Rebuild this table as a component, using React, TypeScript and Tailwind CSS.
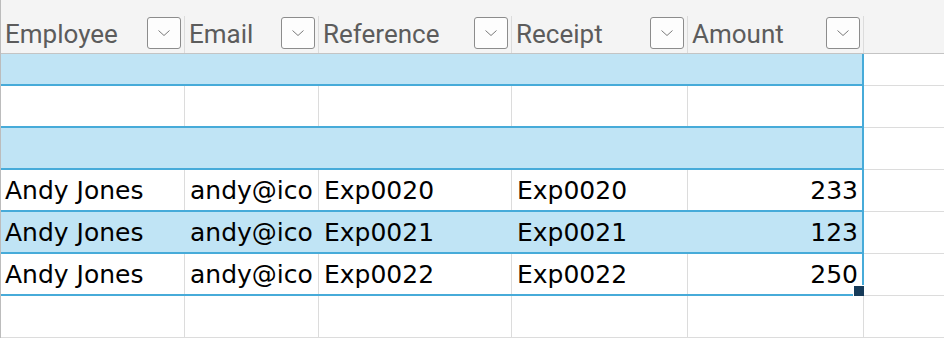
import React from "react";

const cols = [
  { key: "Employee", w: "w-[184px]" },
  { key: "Email", w: "w-[134px]" },
  { key: "Reference", w: "w-[193px]" },
  { key: "Receipt", w: "w-[176px]" },
  { key: "Amount", w: "w-[174px]" },
];

const rows: { blue: boolean; h: string; data?: string[] }[] = [
  { blue: true, h: "h-[30px]" },
  { blue: false, h: "h-[40px]" },
  { blue: true, h: "h-[40px]" },
  { blue: false, h: "h-[40px]", data: ["Andy Jones", "andy@ico", "Exp0020", "Exp0020", "233"] },
  { blue: true, h: "h-[40px]", data: ["Andy Jones", "andy@ico", "Exp0021", "Exp0021", "123"] },
  { blue: false, h: "h-[40px]", data: ["Andy Jones", "andy@ico", "Exp0022", "Exp0022", "250"] },
];

function Chevron() {
  return (
    <svg width="14" height="8" viewBox="0 0 14 8" fill="none">
      <path d="M1.5 1.5 L7 6.5 L12.5 1.5" stroke="#7a7a7a" strokeWidth="1" />
    </svg>
  );
}

export default function App() {
  return (
    <div className="w-[944px] h-[338px] overflow-hidden bg-white border-l border-[#bcbcbc] relative">
      {/* top band */}
      <div className="h-[16px] bg-[#f4f4f4]" />
      {/* header */}
      <div className="flex h-[38px] bg-[#f4f4f4] border-b border-[#c4c4c4]">
        {cols.map((c, i) => (
          <div
            key={c.key}
            className={`${i === 4 ? "w-[176px]" : c.w} flex items-start justify-between border-r border-[#dcdcdc] pl-[4px] pr-[3px]`}
          >
            <span
              className="text-[26px] leading-[37px] text-[#5c5c5c]"
              style={{ fontFamily: "Roboto, 'Noto Sans', sans-serif" }}
            >
              {c.key}
            </span>
            <div className="mt-[1px] w-[34px] h-[32px] shrink-0 rounded-[3px] border border-[#8c8c8c] bg-[#fdfdfd] flex items-center justify-center">
              <Chevron />
            </div>
          </div>
        ))}
        <div className="flex-1" />
      </div>
      {/* body rows */}
      {rows.map((r, ri) => (
        <div key={ri} className="flex">
          <div
            className={`flex ${r.h} box-content border-b-2 border-r-2 border-[#47abd9] ${r.blue ? "bg-[#c0e4f5]" : "bg-white"}`}
          >
            {cols.map((c, i) => (
              <div
                key={c.key}
                className={`${c.w} h-full flex items-center overflow-hidden whitespace-nowrap ${i < 4 ? "border-r" : ""} ${r.blue ? "border-transparent" : "border-[#dcdcdc]"} ${i === 0 ? "pl-[4px]" : "pl-[5px]"} ${i === 4 ? "justify-end pr-[4px]" : ""}`}
              >
                {r.data && (
                  <span
                    className="text-[25px] leading-[28px] text-black pt-[1px]"
                    style={{ fontFamily: "'DejaVu Sans', Verdana, sans-serif" }}
                  >
                    {r.data[i]}
                  </span>
                )}
              </div>
            ))}
          </div>
          <div className="flex-1 border-b border-[#dcdcdc] box-border" />
        </div>
      ))}
      {/* empty row below table */}
      <div className="flex h-[42px]">
        {cols.map((c, i) => (
          <div
            key={c.key}
            className={`${i === 4 ? "w-[176px]" : c.w} h-full border-r border-b border-[#dcdcdc]`}
          />
        ))}
        <div className="flex-1 border-b border-[#dcdcdc]" />
      </div>
      {/* fill handle */}
      <div className="absolute left-[852px] top-[285px] w-[11px] h-[11px] bg-[#163b59] border-l border-t border-white" />
    </div>
  );
}
